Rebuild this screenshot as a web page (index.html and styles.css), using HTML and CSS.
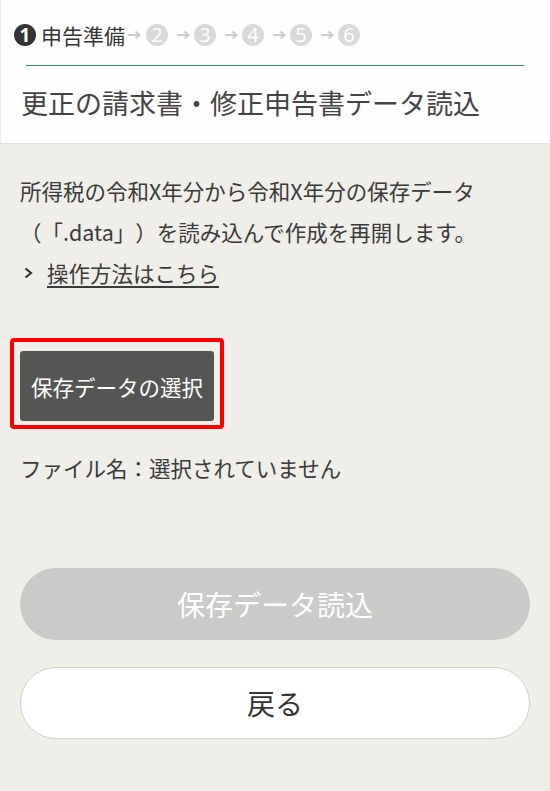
FILE: index.html
```html
<!DOCTYPE html>
<html lang="ja">
<head>
<meta charset="utf-8">
<title>更正の請求書・修正申告書データ読込</title>
<link rel="stylesheet" href="styles.css">
</head>
<body>
<header class="head">
  <ol class="steps">
    <li class="step current"><span class="num">1</span><span class="label">申告準備</span></li>
    <li class="arrow first"><svg viewBox="0 0 14 10" width="14" height="10"><path d="M1 5H12.5M8.5 1.5L12.5 5L8.5 8.5" fill="none" stroke="#cbcbcb" stroke-width="2"/></svg></li>
    <li class="step"><span class="num">2</span></li>
    <li class="arrow"><svg viewBox="0 0 14 10" width="14" height="10"><path d="M1 5H12.5M8.5 1.5L12.5 5L8.5 8.5" fill="none" stroke="#cbcbcb" stroke-width="2"/></svg></li>
    <li class="step"><span class="num">3</span></li>
    <li class="arrow"><svg viewBox="0 0 14 10" width="14" height="10"><path d="M1 5H12.5M8.5 1.5L12.5 5L8.5 8.5" fill="none" stroke="#cbcbcb" stroke-width="2"/></svg></li>
    <li class="step"><span class="num">4</span></li>
    <li class="arrow"><svg viewBox="0 0 14 10" width="14" height="10"><path d="M1 5H12.5M8.5 1.5L12.5 5L8.5 8.5" fill="none" stroke="#cbcbcb" stroke-width="2"/></svg></li>
    <li class="step"><span class="num">5</span></li>
    <li class="arrow"><svg viewBox="0 0 14 10" width="14" height="10"><path d="M1 5H12.5M8.5 1.5L12.5 5L8.5 8.5" fill="none" stroke="#cbcbcb" stroke-width="2"/></svg></li>
    <li class="step"><span class="num">6</span></li>
  </ol>
  <hr class="rule">
  <h1 class="title">更正の請求書・修正申告書データ読込</h1>
</header>
<main class="content">
  <p class="lead">所得税の令和X年分から令和X年分の保存データ（「.data」）を読み込んで作成を再開します。</p>
  <p class="howto">
    <svg class="chev" viewBox="0 0 10 12" width="10" height="12"><path d="M2.5 1.5L8 6L2.5 10.5" fill="none" stroke="#333" stroke-width="2.2"/></svg>
    <a class="howto-link" href="#">操作方法はこちら</a>
  </p>
  <div class="mark">
    <button class="select-btn" type="button">保存データの選択</button>
  </div>
  <p class="filename">ファイル名：選択されていません</p>
  <button class="big-btn disabled" type="button">保存データ読込</button>
  <button class="big-btn back" type="button">戻る</button>
</main>
</body>
</html>
```
FILE: styles.css
```css
html, body {
  margin: 0;
  padding: 0;
}
body {
  background: #efeee9;
  font-family: "Noto Sans CJK JP", "Noto Sans", sans-serif;
  color: #3a3a3a;
  width: 550px;
  min-height: 791px;
  text-spacing-trim: space-all;
}
.head {
  background: #fefefe;
  border-left: 1px solid #ececea;
  border-bottom: 1px solid #deddd7;
  padding: 24px 0 20px;
}
.steps {
  list-style: none;
  margin: 0;
  padding: 0 0 0 13px;
  display: flex;
  align-items: center;
  height: 22px;
}
.step {
  display: flex;
  align-items: center;
  flex: none;
}
.num {
  flex: none;
  display: block;
  width: 22px;
  height: 22px;
  border-radius: 50%;
  background: #d9d9d9;
  color: #fff;
  font-family: "Open Sans", "Noto Sans", sans-serif;
  font-size: 20px;
  line-height: 22px;
  text-align: center;
}
.current .num {
  background: #333;
  font-weight: 700;
  font-size: 19px;
}
.label {
  margin-left: 5px;
  font-size: 21px;
  line-height: 22px;
  color: #333;
  white-space: nowrap;
}
.arrow {
  flex: none;
  display: flex;
  align-items: center;
  margin: 0 4px 0 8px;
}
.arrow.first {
  margin-left: 2px;
  margin-right: 5px;
}
.rule {
  margin: 19px 26px 0 25px;
  border: 0;
  height: 1px;
  background: #2f8a5f;
}
.title {
  margin: 17px 0 0 20px;
  font-size: 27px;
  font-weight: 400;
  line-height: 40px;
  color: #444;
}
.content {
  padding: 26px 20px 40px;
}
.lead {
  margin: 0;
  font-size: 21.5px;
  line-height: 41px;
}
.howto {
  margin: 0;
  display: flex;
  align-items: center;
  height: 41px;
  font-size: 21.5px;
}
.chev {
  margin-left: 3px;
  margin-right: 14px;
}
.howto-link {
  color: #3a3a3a;
  text-decoration: underline;
  text-underline-offset: 4px;
  text-decoration-thickness: 1.5px;
}
.mark {
  display: inline-block;
  margin: 45px 0 0 -10px;
  border: 4px solid #ff0000;
  border-radius: 4px;
  padding: 9px 6px 4px;
}
.select-btn {
  display: block;
  width: 194px;
  height: 70px;
  border: 0;
  border-radius: 3px;
  background: #555653;
  color: #fff;
  font-family: inherit;
  font-size: 21.5px;
  padding: 0;
}
.filename {
  margin: 18px 0 0;
  font-size: 21.5px;
  line-height: 41px;
}
.big-btn {
  display: block;
  width: 510px;
  height: 72px;
  border-radius: 36px;
  font-family: inherit;
  font-size: 28px;
  padding: 0;
}
.disabled {
  margin-top: 80px;
  border: 0;
  background: #cacbc8;
  color: #fff;
}
.back {
  margin-top: 27px;
  background: #fff;
  border: 1px solid #d8cfc6;
  color: #333;
}
```
